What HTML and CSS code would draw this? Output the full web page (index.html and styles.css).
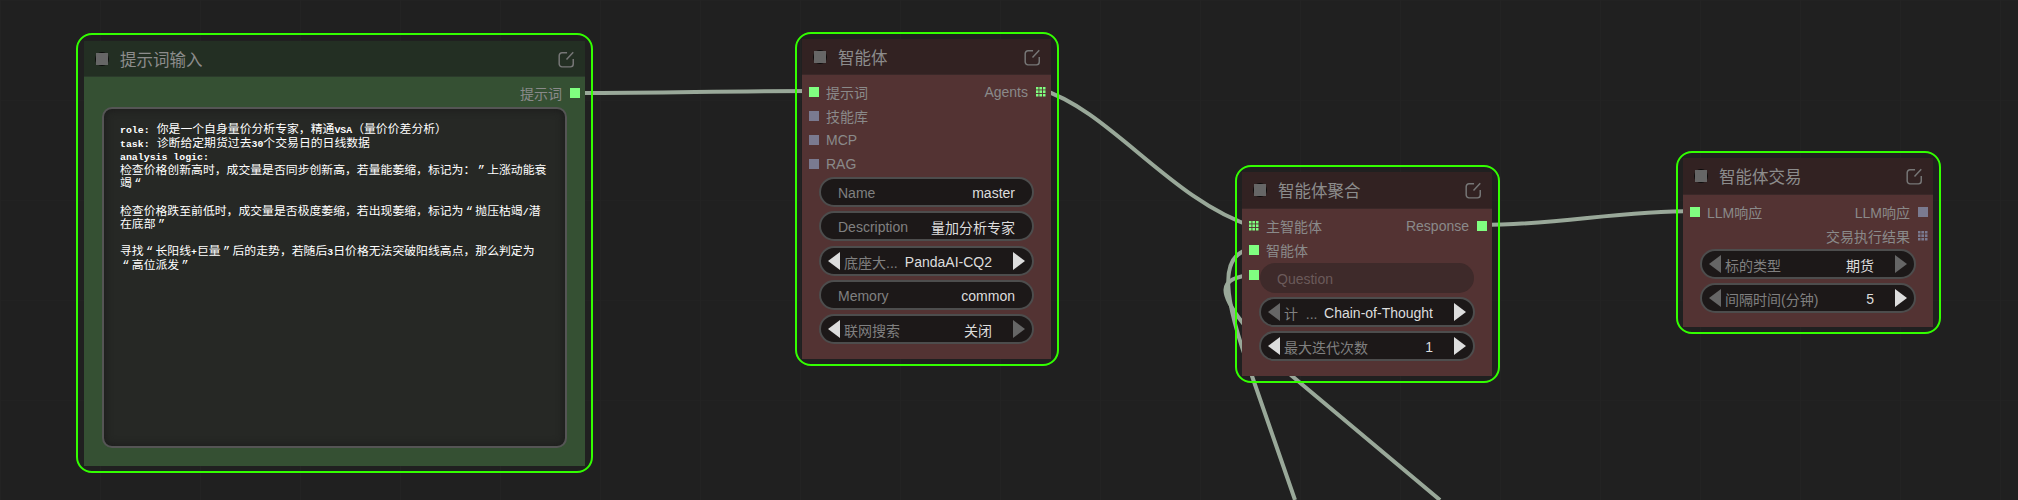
FILE: index.html
```html
<!DOCTYPE html>
<html lang="zh-CN">
<head>
  <meta charset="UTF-8">
  <title>智能体工作流</title>
  <link rel="stylesheet" href="styles.css">
</head>
<body>
  <div class="canvas">

    <svg class="wires" width="2018" height="500">
      <path d="M575 93 C680 93 710 91 814 91"/>
      <path d="M1040 89 C1110 110 1170 200 1254 227"/>
      <path d="M1481 225 C1560 225 1615 211 1695 211"/>
      <path d="M1254 249 C1216 251 1224 300 1252 376 L1295 500"/>
      <path d="M1254 275 C1214 277 1222 296 1242 322 C1256 340 1274 361 1292 376 L1440 500"/>
    </svg>

    <!-- prompt input -->
    <div class="outline node-prompt">
      <div class="node green">
        <div class="title">
          <span class="dot"></span>
          <span class="title-text">提示词输入</span>
          <svg class="edit" viewBox="0 0 15 16"><path d="M8 2.500H3.500a2.500 2.500 0 0 0-2.500 2.500v7.500a2.500 2.500 0 0 0 2.500 2.500h7.500a2.500 2.500 0 0 0 2.500-2.500V8M7.500 8.500L13.500 2"/></svg>
        </div>
        <div class="body">
          <div class="row">
            <span></span>
            <span class="port out"><span class="label">提示词</span><i class="slot"></i></span>
          </div>
          <div class="prompt-text">
            <p><span class="asc">role:</span> 你是一个自身量价分析专家，精通<span class="asc">VSA</span>（量价价差分析）<br><span class="asc">task:</span> 诊断给定期货过去<span class="asc">30</span>个交易日的日线数据<br><span class="asc">analysis logic:</span><br>检查价格创新高时，成交量是否同步创新高，若量能萎缩，标记为：<span class="q">”</span>上涨动能衰竭<span class="q">“</span><br><br>检查价格跌至前低时，成交量是否极度萎缩，若出现萎缩，标记为<span class="q">“</span>抛压枯竭<span class="asc">/</span>潜在底部<span class="q">”</span><br><br>寻找<span class="q">“</span>长阳线<span class="asc">+</span>巨量<span class="q">”</span>后的走势，若随后<span class="asc">3</span>日价格无法突破阳线高点，那么判定为<br><span class="q">“</span>高位派发<span class="q">”</span></p>
          </div>
        </div>
      </div>
    </div>

    <!-- agent -->
    <div class="outline node-agent">
      <div class="node red">
        <div class="title">
          <span class="dot"></span>
          <span class="title-text">智能体</span>
          <svg class="edit" viewBox="0 0 15 16"><path d="M8 2.500H3.500a2.500 2.500 0 0 0-2.500 2.500v7.500a2.500 2.500 0 0 0 2.500 2.500h7.500a2.500 2.500 0 0 0 2.500-2.500V8M7.500 8.500L13.500 2"/></svg>
        </div>
        <div class="body">
          <div class="row">
            <span class="port"><i class="slot"></i><span class="label">提示词</span></span>
            <span class="port out"><span class="label">Agents</span><i class="slot grid"></i></span>
          </div>
          <div class="row"><span class="port"><i class="slot off"></i><span class="label">技能库</span></span></div>
          <div class="row"><span class="port"><i class="slot off"></i><span class="label">MCP</span></span></div>
          <div class="row"><span class="port"><i class="slot off"></i><span class="label">RAG</span></span></div>
          <div class="widgets">
            <div class="widget text"><span class="w-label">Name</span><span class="w-value">master</span></div>
            <div class="widget text"><span class="w-label">Description</span><span class="w-value">量加分析专家</span></div>
            <div class="widget"><i class="arrow left"></i><span class="w-label">底座大...</span><span class="w-value">PandaAI-CQ2</span><i class="arrow right"></i></div>
            <div class="widget text"><span class="w-label">Memory</span><span class="w-value">common</span></div>
            <div class="widget"><i class="arrow left"></i><span class="w-label">联网搜索</span><span class="w-value">关闭</span><i class="arrow right dim"></i></div>
          </div>
        </div>
      </div>
    </div>

    <!-- agent aggregation -->
    <div class="outline node-merge">
      <div class="node red">
        <div class="title">
          <span class="dot"></span>
          <span class="title-text">智能体聚合</span>
          <svg class="edit" viewBox="0 0 15 16"><path d="M8 2.500H3.500a2.500 2.500 0 0 0-2.500 2.500v7.500a2.500 2.500 0 0 0 2.500 2.500h7.500a2.500 2.500 0 0 0 2.500-2.500V8M7.500 8.500L13.500 2"/></svg>
        </div>
        <div class="body">
          <div class="row">
            <span class="port"><i class="slot grid"></i><span class="label">主智能体</span></span>
            <span class="port out"><span class="label">Response</span><i class="slot"></i></span>
          </div>
          <div class="row"><span class="port"><i class="slot"></i><span class="label">智能体</span></span></div>
          <div class="question-row">
            <i class="slot"></i>
            <div class="widget input"><span class="w-label">Question</span></div>
          </div>
          <div class="widgets after-input">
            <div class="widget"><i class="arrow left dim"></i><span class="w-label keep">计  ...</span><span class="w-value">Chain-of-Thought</span><i class="arrow right"></i></div>
            <div class="widget"><i class="arrow left"></i><span class="w-label">最大迭代次数</span><span class="w-value">1</span><i class="arrow right"></i></div>
          </div>
        </div>
      </div>
    </div>

    <!-- agent trade -->
    <div class="outline node-trade">
      <div class="node red">
        <div class="title">
          <span class="dot"></span>
          <span class="title-text">智能体交易</span>
          <svg class="edit" viewBox="0 0 15 16"><path d="M8 2.500H3.500a2.500 2.500 0 0 0-2.500 2.500v7.500a2.500 2.500 0 0 0 2.500 2.500h7.500a2.500 2.500 0 0 0 2.500-2.500V8M7.500 8.500L13.500 2"/></svg>
        </div>
        <div class="body">
          <div class="row">
            <span class="port"><i class="slot"></i><span class="label">LLM响应</span></span>
            <span class="port out"><span class="label">LLM响应</span><i class="slot off"></i></span>
          </div>
          <div class="row">
            <span></span>
            <span class="port out"><span class="label">交易执行结果</span><i class="slot grid off"></i></span>
          </div>
          <div class="widgets">
            <div class="widget"><i class="arrow left dim"></i><span class="w-label">标的类型</span><span class="w-value">期货</span><i class="arrow right dim"></i></div>
            <div class="widget"><i class="arrow left dim"></i><span class="w-label">间隔时间(分钟)</span><span class="w-value">5</span><i class="arrow right"></i></div>
          </div>
        </div>
      </div>
    </div>

  </div>
</body>
</html>
```

FILE: styles.css
```css
* {
  box-sizing: border-box;
}

body {
  margin: 0;
  background: #202020;
  font-family: "Liberation Sans", "Noto Sans CJK SC", sans-serif;
  font-size: 14px;
}

.canvas {
  position: relative;
  width: 2018px;
  height: 500px;
  overflow: hidden;
  background-image:
    linear-gradient(90deg, #232323 1px, transparent 1px),
    linear-gradient(#222222 1px, transparent 1px);
  background-size: 100px 100px;
}

.wires {
  position: absolute;
  left: 0;
  top: 0;
}

.wires path {
  fill: none;
  stroke: #99a899;
  stroke-width: 4px;
  stroke-linejoin: round;
}

/* selected outline, node sits inside it */
.outline {
  position: absolute;
  padding: 5px 6px 5px 5px;
  border: 2px solid #33ff00;
  border-radius: 16px;
}

.node-prompt {
  left: 76px;
  top: 33px;
  width: 517px;
  height: 440px;
  padding: 6px 6px 5px;
}

.node-agent {
  left: 795px;
  top: 32px;
  width: 264px;
  height: 334px;
}

.node-merge {
  left: 1235px;
  top: 165px;
  width: 265px;
  height: 218px;
}

.node-trade {
  left: 1676px;
  top: 151px;
  width: 265px;
  height: 183px;
}

.node {
  display: flex;
  flex-direction: column;
  height: 100%;
}

.title {
  display: flex;
  align-items: center;
  height: 36px;
  flex-shrink: 0;
  padding: 0 10px 0 11px;
}

.node-merge .title,
.node-trade .title {
  height: 37px;
}

.green .title {
  background: #232f23;
  border-bottom: 1px solid #2b3a2b;
}

.red .title {
  background: #322222;
  border-bottom: 1px solid #3a2828;
}

.green .body {
  background: #355033;
  padding-top: 4px;
}

.red .body {
  background: #533333;
}

.dot {
  position: relative;
  width: 14px;
  height: 14px;
  border-radius: 50%;
  background: #0c0c0c;
  flex-shrink: 0;
}

.dot::after {
  content: "";
  position: absolute;
  left: 1px;
  top: 1px;
  width: 12px;
  height: 12px;
  background: #666;
}

.title-text {
  margin-left: 11px;
  color: #8c8c8c;
  font-size: 16.5px;
}

.edit {
  width: 17px;
  height: 18px;
  margin-left: auto;
  fill: none;
  stroke: #777777;
  stroke-width: 1.3px;
}

.body {
  flex: 1;
  padding-top: 5px;
}

.row {
  display: flex;
  justify-content: space-between;
  height: 24px;
  padding: 0 5px 0 7px;
}

.port {
  display: flex;
  align-items: center;
  gap: 7px;
}

.port.out {
  gap: 8px;
}

.label {
  color: #8a8a8a;
}

.slot {
  display: block;
  width: 10px;
  height: 10px;
  background: #80ff80;
}

.slot.off {
  background: #7a7a90;
}

.slot.grid {
  background-color: #80ff80;
  background-image:
    linear-gradient(90deg, #533333 1px, transparent 1px),
    linear-gradient(#533333 1px, transparent 1px);
  background-size: 3.5px 3.5px;
  background-position: -1px -1px;
}

.slot.grid.off {
  background-color: #7a7a90;
}

.widgets {
  display: flex;
  flex-direction: column;
  gap: 4.3px;
  margin: 1px 17px 0;
}

.widgets.after-input {
  margin-top: 4px;
}

.widget {
  display: flex;
  align-items: center;
  height: 30px;
  padding: 0 7px;
  border: 2px solid #4d4d4d;
  border-radius: 15px;
  background: #1c1818;
}

.widget.text {
  padding: 0 17px;
}

.w-label {
  margin-left: 4px;
  padding-top: 2px;
  color: #808080;
  white-space: nowrap;
}

.text .w-label {
  margin-left: 0;
}

.w-label.keep {
  white-space: pre;
}

.w-value {
  margin-left: auto;
  margin-right: 21px;
  padding-top: 2px;
  color: #dddddd;
  white-space: nowrap;
}

.text .w-value {
  margin-right: 0;
}

.arrow {
  display: block;
  flex-shrink: 0;
  width: 0;
  height: 0;
  border-top: 9px solid transparent;
  border-bottom: 9px solid transparent;
}

.arrow.left {
  border-right: 12px solid #dddddd;
}

.arrow.right {
  border-left: 12px solid #dddddd;
}

.arrow.left.dim {
  border-right-color: #666666;
}

.arrow.right.dim {
  border-left-color: #666666;
}

.question-row {
  display: flex;
  align-items: center;
  gap: 1px;
  margin-top: 1px;
  padding: 0 18px 0 7px;
}

.question-row .slot {
  margin-top: -6px;
}

.widget.input {
  flex: 1;
  padding: 0 17px;
  border: none;
  background: #3e2a2a;
}

.input .w-label {
  margin-left: 0;
  color: #6b5a5a;
}

.prompt-text {
  height: 341px;
  margin: 2px 18px 0;
  padding: 15px 16px 0;
  border: 2px solid #555555;
  border-radius: 10px;
  background: #262825;
  box-shadow: inset 0 0 8px #1a1a1a;
  color: #ffffff;
  font-family: "Liberation Mono", "Noto Sans CJK SC", monospace;
  font-size: 11.85px;
  line-height: 13.6px;
}

.prompt-text p {
  margin: 0;
}

.asc {
  font-size: 9.9px;
  font-weight: bold;
}

/* quote glyphs take a full CJK cell */
.q {
  display: inline-block;
  width: 11.85px;
  text-align: center;
}
```
